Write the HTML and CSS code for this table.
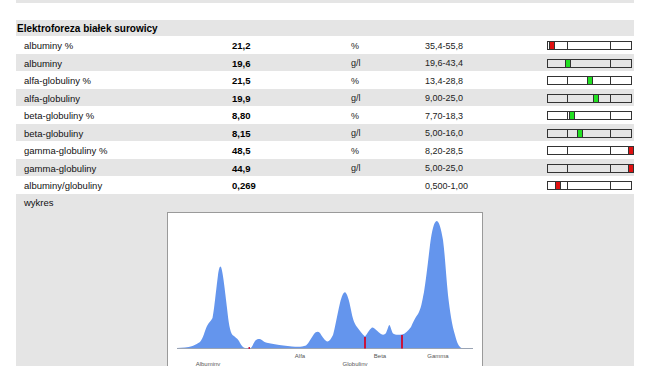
FILE: index.html
```html
<!DOCTYPE html>
<html lang="pl">
<head>
<meta charset="utf-8">
<title>Elektroforeza białek surowicy</title>
<link rel="stylesheet" href="styles.css">
</head>
<body>
<div class="page">
  <div class="topstrip"></div>
  <div class="section-head">Elektroforeza białek surowicy</div>

  <div class="row">
    <div class="name">albuminy %</div><div class="val">21,2</div><div class="unit">%</div><div class="range">35,4-55,8</div>
    <div class="bar"><span class="tick t1"></span><span class="tick t2"></span><span class="mark red" style="left:1px"></span></div>
  </div>
  <div class="row alt">
    <div class="name">albuminy</div><div class="val">19,6</div><div class="unit">g/l</div><div class="range">19,6-43,4</div>
    <div class="bar"><span class="tick t1"></span><span class="tick t2"></span><span class="mark green" style="left:17px"></span></div>
  </div>
  <div class="row">
    <div class="name">alfa-globuliny %</div><div class="val">21,5</div><div class="unit">%</div><div class="range">13,4-28,8</div>
    <div class="bar"><span class="tick t1"></span><span class="tick t2"></span><span class="mark green" style="left:39px"></span></div>
  </div>
  <div class="row alt">
    <div class="name">alfa-globuliny</div><div class="val">19,9</div><div class="unit">g/l</div><div class="range">9,00-25,0</div>
    <div class="bar"><span class="tick t1"></span><span class="tick t2"></span><span class="mark green" style="left:45px"></span></div>
  </div>
  <div class="row">
    <div class="name">beta-globuliny %</div><div class="val">8,80</div><div class="unit">%</div><div class="range">7,70-18,3</div>
    <div class="bar"><span class="tick t1"></span><span class="tick t2"></span><span class="mark green" style="left:21px"></span></div>
  </div>
  <div class="row alt">
    <div class="name">beta-globuliny</div><div class="val">8,15</div><div class="unit">g/l</div><div class="range">5,00-16,0</div>
    <div class="bar"><span class="tick t1"></span><span class="tick t2"></span><span class="mark green" style="left:29px"></span></div>
  </div>
  <div class="row">
    <div class="name">gamma-globuliny %</div><div class="val">48,5</div><div class="unit">%</div><div class="range">8,20-28,5</div>
    <div class="bar"><span class="tick t1"></span><span class="tick t2"></span><span class="mark red" style="left:80px"></span></div>
  </div>
  <div class="row alt">
    <div class="name">gamma-globuliny</div><div class="val">44,9</div><div class="unit">g/l</div><div class="range">5,00-25,0</div>
    <div class="bar"><span class="tick t1"></span><span class="tick t2"></span><span class="mark red" style="left:80px"></span></div>
  </div>
  <div class="row">
    <div class="name">albuminy/globuliny</div><div class="val">0,269</div><div class="unit"></div><div class="range">0,500-1,00</div>
    <div class="bar"><span class="tick t1"></span><span class="tick t2"></span><span class="mark red" style="left:7px"></span></div>
  </div>

  <div class="chart-row">
    <div class="name chart-label">wykres</div>
    <div class="chart">
      <svg width="314" height="168" viewBox="168 213 314 168" xmlns="http://www.w3.org/2000/svg">
        <path class="curve" d="M177 348 L185 347.5 C190 347 195 345.5 200 342 C203 339 205 330 207 326 C209 322 211 321 212.5 318 C214 312 216 290 218 275 C219 268 220 265 221 267 C223 272 225 292 227 308 C228.5 322 230 332 232.5 335 C235 337 237 338 239 341 C241 345 243 348 246 348.3 L250 348.3 C252 348 253 344 255 341 C257 339 259 338.5 261 339.5 C263 341 265 342.5 268 343 C275 344.5 283 345.5 292 346.5 C298 347 302 347 306 345.5 C309 343 311 338 314 334 C316 331.5 318 331 320 333 C322 336 324 340 327 341.5 C329 342 331 339 333 335 C335 328 337 316 340 303 C342 295 344 291 345.5 292.5 C347 294 349 299 351 310 C352.5 318 354 323 357 327 C360 331 362 334 365 336.5 C367 334 369 330 372 327.5 C374 327 376 330 379 332.5 C381 334.5 384 336 386 333 C387.5 330 388.5 325 389.5 325 C390.5 326 391.5 331 393 333.5 C395 335 398 335 402 334.5 C405 334 408 331 411 327 C413 322 415 318 418 314 C421 309 422 302 424 292 C426 280 428 262 430 245 C432 230 434 222 436.5 221 C439 221 441 228 443 240 C445 255 446 275 448 295 C450 312 452 325 455 335 C457 343 459 347 462 348.3 L473 348.3 L473 349 L177 349 Z"/>
        <line class="baseline" x1="177" y1="348.5" x2="473" y2="348.5"/>
        <rect class="sep" x="248.5" y="347" width="1.5" height="2"/>
        <rect class="sep" x="364" y="337" width="2" height="11.5"/>
        <rect class="sep" x="401" y="335" width="2" height="13.5"/>
        <text class="lbl" x="300" y="357.5" text-anchor="middle">Alfa</text>
        <text class="lbl" x="380" y="357.5" text-anchor="middle">Beta</text>
        <text class="lbl" x="438" y="357.5" text-anchor="middle">Gamma</text>
        <text class="lbl" x="208" y="366" text-anchor="middle">Albuminy</text>
        <text class="lbl" x="355" y="366" text-anchor="middle">Globuliny</text>
      </svg>
    </div>
  </div>
</div>
</body>
</html>
```

FILE: styles.css
```css
html, body {
  margin: 0;
  padding: 0;
  background: #ffffff;
}

body {
  font-family: "Liberation Sans", Arial, sans-serif;
  font-size: 9.5px;
  color: #111111;
}

.page {
  width: 618px;
  margin-left: 16px;
}

.topstrip {
  height: 3px;
  background: #e5e5e5;
}

.section-head {
  margin-top: 17px;
  height: 16px;
  padding-left: 1px;
  display: flex;
  align-items: center;
  padding-top: 1px;
  box-sizing: border-box;
  background: #e5e5e5;
  font-weight: bold;
  font-size: 10px;
  color: #000;
}

.row {
  display: grid;
  grid-template-columns: 216px 119px 74px 122px 85px;
  align-items: center;
  height: 17.5px;
  padding-top: 2px;
  box-sizing: border-box;
  background: #ffffff;
}

.row.alt {
  background: #e5e5e5;
}

.name {
  padding-left: 8px;
}

.val {
  font-weight: bold;
  color: #000;
}

.unit, .range {
  color: #222;
  font-size: 9px;
}

.bar {
  position: relative;
  width: 85px;
  height: 9px;
  box-sizing: border-box;
  border: 1px solid #333333;
}

.tick {
  position: absolute;
  top: 0;
  bottom: 0;
  width: 1px;
  background: #333333;
}

.t1 { left: 19px; }
.t2 { left: 62px; }

.mark {
  position: absolute;
  top: -1px;
  width: 6px;
  height: 9px;
  box-sizing: border-box;
  border: 1px solid #333333;
}

.mark.red { background: #e01010; }
.mark.green { background: #22e022; }

.chart-row {
  background: #e5e5e5;
  height: 200px;
  box-sizing: border-box;
}

.chart-label {
  height: 17px;
  display: flex;
  align-items: center;
}

.chart {
  width: 316px;
  height: 170px;
  margin: 1.5px auto 0;
  box-sizing: border-box;
  border: 1px solid #9a9a9a;
  background: #ffffff;
}

.chart svg {
  display: block;
}

.curve {
  fill: #6495ed;
  stroke: none;
}

.baseline {
  stroke: #9aa4b4;
  stroke-width: 1;
}

.sep {
  fill: #c8143c;
}

.lbl {
  font-family: "Liberation Sans", Arial, sans-serif;
  font-size: 6px;
  fill: #555555;
}
```
